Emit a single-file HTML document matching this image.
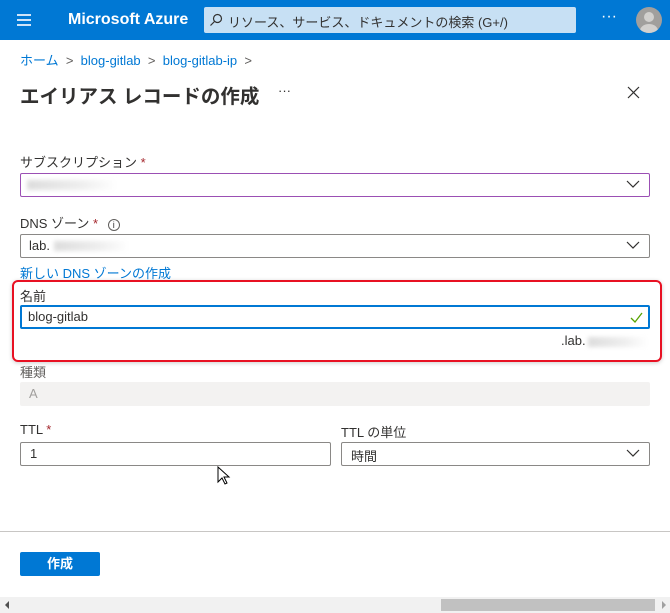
<!DOCTYPE html>
<html><head><meta charset="utf-8"><style>
*{margin:0;padding:0;box-sizing:border-box}
body{width:670px;height:613px;overflow:hidden;background:#fff;font-family:"Liberation Sans","Noto Sans CJK JP",sans-serif;color:#323130;position:relative;font-size:13px}
.a{position:absolute}
.top{left:0;top:0;width:670px;height:40px;background:#0078d4}
.sel{border:1px solid #8a8886;border-radius:2px;background:#fff}
.chev{position:absolute;right:9px;top:5px}
.lbl{font-size:13px;color:#323130}
.req{color:#a4262c}
.blur{background:linear-gradient(90deg,#ddd,#eee 60%,#fff);filter:blur(2px);height:10px}
</style></head><body>
<div class="a top"></div>
<div class="a" style="left:17px;top:14px;width:14px;height:2px;background:#cfe4f8;box-shadow:0 5px 0 #cfe4f8,0 10px 0 #cfe4f8"></div>
<div class="a" style="left:68px;top:11px;color:#fff;font-size:16px;font-weight:bold">Microsoft Azure</div>
<div class="a" style="left:204px;top:7px;width:372px;height:26px;background:#c7e0f4;border-radius:2px"></div>
<svg class="a" style="left:209px;top:13px" width="14" height="14"><circle cx="8.5" cy="5.5" r="4" fill="none" stroke="#323130" stroke-width="1.2"/><line x1="5.5" y1="8.5" x2="1.5" y2="12.5" stroke="#323130" stroke-width="1.2"/></svg>
<div class="a" style="left:228px;top:12px;font-size:13px;color:#323130">リソース、サービス、ドキュメントの検索 (G+/)</div>
<div class="a" style="left:601px;top:8px;color:#fff;font-size:16px">···</div>
<div class="a" style="left:636px;top:7px;width:26px;height:26px;border-radius:50%;background:#a19f9d;overflow:hidden"><div class="a" style="left:8px;top:5px;width:10px;height:10px;border-radius:50%;background:#d2d0ce"></div><div class="a" style="left:4px;top:17px;width:18px;height:14px;border-radius:50%;background:#d2d0ce"></div></div>
<div class="a" style="left:20px;top:50px;font-size:13px;color:#0078d4">ホーム <span style="color:#605e5c">&nbsp;&gt;&nbsp;</span> blog-gitlab <span style="color:#605e5c">&nbsp;&gt;&nbsp;</span> blog-gitlab-ip <span style="color:#605e5c">&nbsp;&gt;</span></div>
<div class="a" style="left:20px;top:80px;font-size:19.5px;font-weight:bold;color:#323130;white-space:nowrap">エイリアス レコードの作成</div>
<div class="a" style="left:278px;top:83px;font-size:13px">···</div>
<svg class="a" style="left:627px;top:86px" width="13" height="13"><path d="M1 1L12 12M12 1L1 12" stroke="#323130" stroke-width="1.2"/></svg>
<div class="a lbl" style="left:20px;top:152px">サブスクリプション <span class="req">*</span></div>
<div class="a sel" style="left:20px;top:173px;width:630px;height:24px;border-color:#9b4fb4"><div class="a blur" style="left:6px;top:6px;width:90px"></div><svg class="chev" width="14" height="10"><path d="M1 2l6 6 6-6" fill="none" stroke="#323130" stroke-width="1.2"/></svg></div>
<div class="a lbl" style="left:20px;top:213px">DNS ゾーン <span class="req">*</span> <span style="display:inline-block;width:12px;height:12px;border:1px solid #605e5c;border-radius:50%;font-size:9px;text-align:center;line-height:11px;margin-left:6px">i</span></div>
<div class="a sel" style="left:20px;top:234px;width:630px;height:24px"><div class="a" style="left:8px;top:3px">lab.</div><div class="a blur" style="left:33px;top:6px;width:75px"></div><svg class="chev" width="14" height="10"><path d="M1 2l6 6 6-6" fill="none" stroke="#323130" stroke-width="1.2"/></svg></div>
<div class="a" style="left:20px;top:263px;color:#0078d4">新しい DNS ゾーンの作成</div>
<div class="a" style="left:12px;top:280px;width:650px;height:82px;border:2px solid #e81123;border-radius:6px;box-shadow:0 1px 4px rgba(0,0,0,.2)"></div>
<div class="a lbl" style="left:20px;top:286px">名前</div>
<div class="a" style="left:20px;top:305px;width:630px;height:24px;border:2px solid #0078d4;border-radius:2px"><div class="a" style="left:6px;top:2px;color:#323130">blog-gitlab</div><svg class="a" style="right:5px;top:5px" width="13" height="11"><path d="M1 6l4 4 7-9" fill="none" stroke="#57a300" stroke-width="1.3"/></svg></div>
<div class="a" style="left:561px;top:333px;color:#323130">.lab.</div><div class="a blur" style="left:588px;top:337px;width:60px"></div>
<div class="a lbl" style="left:20px;top:362px;color:#605e5c">種類</div>
<div class="a" style="left:20px;top:382px;width:630px;height:24px;background:#f3f2f1;border-radius:2px"><div class="a" style="left:9px;top:4px;color:#a19f9d">A</div></div>
<div class="a lbl" style="left:20px;top:422px">TTL <span class="req">*</span></div>
<div class="a sel" style="left:20px;top:442px;width:311px;height:24px"><div class="a" style="left:9px;top:3px">1</div></div>
<div class="a lbl" style="left:341px;top:422px">TTL の単位</div>
<div class="a sel" style="left:341px;top:442px;width:309px;height:24px"><div class="a" style="left:9px;top:3px">時間</div><svg class="chev" width="14" height="10"><path d="M1 2l6 6 6-6" fill="none" stroke="#323130" stroke-width="1.2"/></svg></div>
<svg class="a" style="left:217px;top:466px" width="14" height="20"><path d="M1 1v15l4-4 3 6 2-1-3-6h5z" fill="#fff" stroke="#000" stroke-width="1"/></svg>
<div class="a" style="left:0;top:531px;width:670px;height:1px;background:#c8c6c4"></div>
<div class="a" style="left:20px;top:552px;width:80px;height:24px;background:#0078d4;border-radius:2px;color:#fff;font-weight:bold;text-align:center;line-height:24px">作成</div>
<div class="a" style="left:0;top:597px;width:670px;height:16px;background:#f1f1f1"></div>
<div class="a" style="left:441px;top:599px;width:214px;height:12px;background:#c1c1c1"></div>
<div class="a" style="left:5px;top:601px;width:0;height:0;border:4px solid transparent;border-right-color:#505050;border-left:0"></div>
<div class="a" style="left:662px;top:601px;width:0;height:0;border:4px solid transparent;border-left-color:#a0a0a0;border-right:0"></div>
</body></html>
